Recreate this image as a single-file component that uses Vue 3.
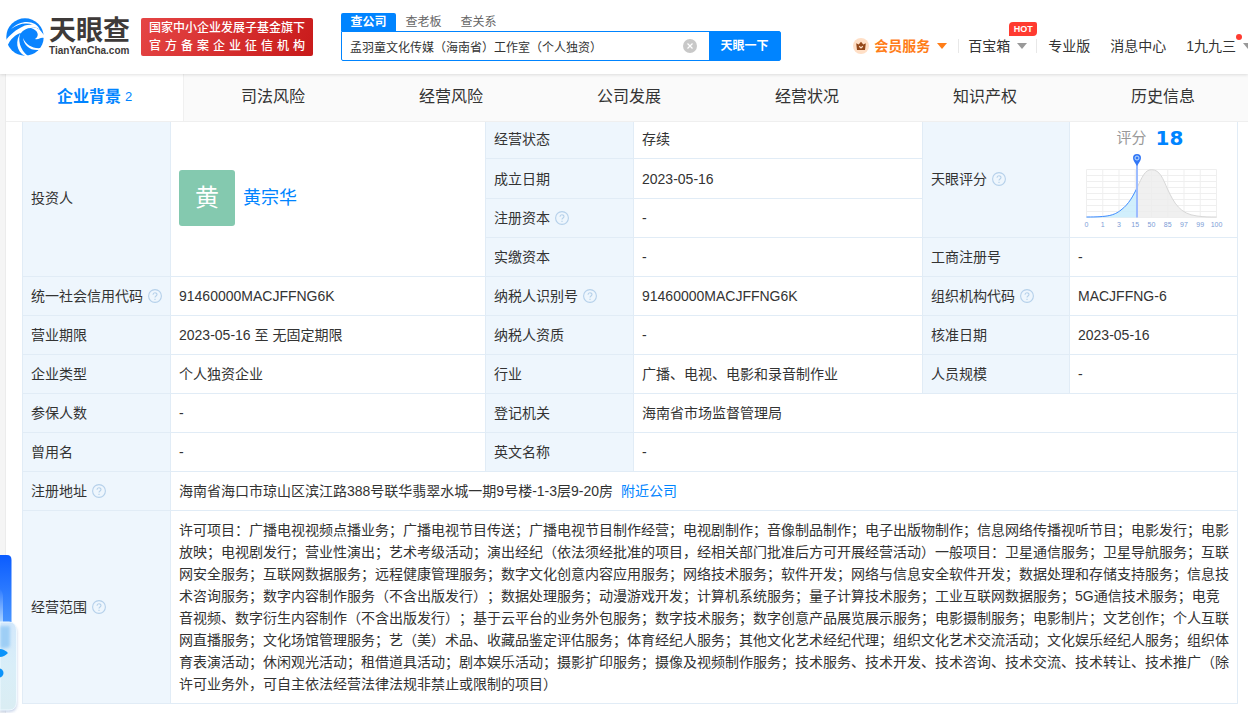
<script setup>
import { ref } from 'vue'

const keyword = ref('孟羽童文化传媒（海南省）工作室（个人独资）')
const searchTabs = ['查公司', '查老板', '查关系']
const sections = ['企业背景', '司法风险', '经营风险', '公司发展', '经营状况', '知识产权', '历史信息']

const scope =
  '许可项目：广播电视视频点播业务；广播电视节目传送；广播电视节目制作经营；电视剧制作；音像制品制作；电子出版物制作；信息网络传播视听节目；电影发行；电影放映；电视剧发行；营业性演出；艺术考级活动；演出经纪（依法须经批准的项目，经相关部门批准后方可开展经营活动）一般项目：卫星通信服务；卫星导航服务；互联网安全服务；互联网数据服务；远程健康管理服务；数字文化创意内容应用服务；网络技术服务；软件开发；网络与信息安全软件开发；数据处理和存储支持服务；信息技术咨询服务；数字内容制作服务（不含出版发行）；数据处理服务；动漫游戏开发；计算机系统服务；量子计算技术服务；工业互联网数据服务；5G通信技术服务；电竞音视频、数字衍生内容制作（不含出版发行）；基于云平台的业务外包服务；数字技术服务；数字创意产品展览展示服务；电影摄制服务；电影制片；文艺创作；个人互联网直播服务；文化场馆管理服务；艺（美）术品、收藏品鉴定评估服务；体育经纪人服务；其他文化艺术经纪代理；组织文化艺术交流活动；文化娱乐经纪人服务；组织体育表演活动；休闲观光活动；租借道具活动；剧本娱乐活动；摄影扩印服务；摄像及视频制作服务；技术服务、技术开发、技术咨询、技术交流、技术转让、技术推广（除许可业务外，可自主依法经营法律法规非禁止或限制的项目）'

const h = (text, extra = {}) => ({ tag: 'th', text, ...extra })
const d = (text, extra = {}) => ({ tag: 'td', text, ...extra })

const rows = [
  [
    h('投资人', { rows: 4 }),
    d('', { rows: 4, kind: 'investor' }),
    h('经营状态'),
    d('存续'),
    h('天眼评分', { rows: 3, help: true }),
    d('', { rows: 3, kind: 'score' }),
  ],
  [h('成立日期'), d('2023-05-16', { kind: 'tall' })],
  [h('注册资本', { help: true }), d('-')],
  [h('实缴资本'), d('-'), h('工商注册号'), d('-')],
  [
    h('统一社会信用代码', { help: true }),
    d('91460000MACJFFNG6K'),
    h('纳税人识别号', { help: true }),
    d('91460000MACJFFNG6K'),
    h('组织机构代码', { help: true }),
    d('MACJFFNG-6'),
  ],
  [h('营业期限'), d('2023-05-16 至 无固定期限'), h('纳税人资质'), d('-'), h('核准日期'), d('2023-05-16')],
  [h('企业类型'), d('个人独资企业'), h('行业'), d('广播、电视、电影和录音制作业'), h('人员规模'), d('-')],
  [h('参保人数'), d('-'), h('登记机关'), d('海南省市场监督管理局', { cols: 3 })],
  [h('曾用名'), d('-'), h('英文名称'), d('-', { cols: 3 })],
  [h('注册地址', { help: true }), d('海南省海口市琼山区滨江路388号联华翡翠水城一期9号楼-1-3层9-20房', { cols: 5, kind: 'address' })],
  [h('经营范围', { help: true }), d(scope, { cols: 5 })],
]

const ticks = ['0', '1', '3', '15', '50', '85', '97', '99', '100']
const tickX = (i) => 2.5 + i * 16.25
</script>

<template>
  <div class="page">
    <header class="header">
      <a class="logo" href="#" aria-label="天眼查">
        <svg class="mark" viewBox="0 0 38 38" aria-hidden="true">
          <circle cx="19" cy="19" r="18.7" fill="#0a84ff" />
          <path d="M5 11C12 4 22 2 29 6C32 8 33 10 34 12C31 9 28 9 25 10C21 10 17 12 15 15C10 16 4 21 1 29C0 27 0 24 0 22C3 18 8 13 14 10C18 7 23 6 27 7C20 4 12 6 5 11Z" fill="#fff" />
          <path d="M25 10C30 8 34 11 38 17V20C34 19 33 22 29 21C34 18 32 12 25 10Z" fill="#fff" />
          <path d="M15 14C11 21 14 32 22 38L19 38C10 33 9 23 15 14Z" fill="#fff" />
          <path d="M17 20C18 27 24 33 33 32L35 30C27 31 20 27 17 20Z" fill="#fff" />
        </svg>
        <span class="words">
          <span class="brand">天眼查</span>
          <span class="domain">TianYanCha.com</span>
        </span>
      </a>
      <div class="slogan">
        <span>国家中小企业发展子基金旗下</span>
        <span class="second">官方备案企业征信机构</span>
      </div>
      <form class="search" @submit.prevent>
        <div class="kinds">
          <button v-for="(t, i) in searchTabs" :key="t" type="button" :class="{ on: i === 0 }">{{ t }}</button>
        </div>
        <div class="box">
          <input v-model="keyword" type="text" aria-label="搜索公司" />
          <button class="clear" type="button" aria-label="清空" @click="keyword = ''">
            <svg viewBox="0 0 14 14"><circle cx="7" cy="7" r="7" fill="#c8c8c8" /><path d="M4.5 4.5l5 5M9.5 4.5l-5 5" stroke="#fff" stroke-width="1.2" /></svg>
          </button>
          <button class="go" type="submit">天眼一下</button>
        </div>
      </form>
      <nav class="nav">
        <a class="vip" href="#">
          <svg class="crown" viewBox="0 0 16 16" aria-hidden="true">
            <circle cx="8" cy="8" r="8" fill="#ffdfc6" />
            <path d="M3.2 5.2L5.7 6.4L8 3.7L10.3 6.4L12.8 5.2L12 12H4Z" fill="#94481a" />
            <path d="M6.2 8.3L8 10L9.8 8.3" fill="none" stroke="#ffdfc6" stroke-width="1.2" />
          </svg>
          会员服务<i class="caret"></i>
        </a>
        <a class="tools" href="#">百宝箱<i class="caret"></i><b class="hot">HOT</b></a>
        <a class="pro" href="#">专业版</a>
        <a class="msg" href="#">消息中心</a>
        <a class="user" href="#">1九九三<i class="caret"></i><i class="dot"></i></a>
      </nav>
    </header>

    <main class="main">
      <nav class="sections">
        <a v-for="(s, i) in sections" :key="s" href="#" :class="{ on: i === 0 }">{{ s }}<small v-if="i === 0">2</small></a>
      </nav>
      <div class="content">
        <table>
          <colgroup>
            <col class="label" /><col class="v1" /><col class="label" /><col class="v2" /><col class="label last" /><col class="v3" />
          </colgroup>
          <tbody>
            <tr v-for="(row, r) in rows" :key="r">
              <component
                :is="c.tag"
                v-for="(c, i) in row"
                :key="i"
                :rowspan="c.rows"
                :colspan="c.cols"
                :scope="c.tag === 'th' ? 'row' : null"
                :class="c.kind"
              >
                <div v-if="c.kind === 'investor'" class="person">
                  <span class="avatar">黄</span><a href="#">黄宗华</a>
                </div>
                <template v-else-if="c.kind === 'score'">
                  <div class="rate">评分<strong>18</strong></div>
                  <svg class="chart" viewBox="0 0 142 78" role="img" aria-label="评分分布">
                    <g stroke="#efefef" stroke-width="1">
                      <path v-for="n in 9" :key="'v' + n" :d="`M${tickX(n - 1)} 17.5V65.5`" />
                      <path v-for="n in 9" :key="'h' + n" :d="`M2.5 ${11.5 + n * 6}H132.5`" />
                    </g>
                    <path d="M53 36C58 25 61 17.7 67.5 17.7C76 17.7 79 27 83.5 37C90 51 96 62 113 64C120 65 126 65 132.5 65V65.5H53Z" fill="#ececec" fill-opacity=".8" />
                    <path d="M2.5 65C24 65 30 63.5 37 58C45 52 49 44 53 36V65.5H2.5Z" fill="#c9ecfb" fill-opacity=".85" />
                    <path d="M53 36C58 25 61 17.7 67.5 17.7C76 17.7 79 27 83.5 37C90 51 96 62 113 64C120 65 126 65 132.5 65" fill="none" stroke="#d8d8d8" />
                    <path d="M2.5 65C24 65 30 63.5 37 58C45 52 49 44 53 36" fill="none" stroke="#3d8bff" />
                    <path d="M53 12V65.5" stroke="#9dbcff" stroke-width="2" />
                    <path d="M53 14C51.5 11 49 9 49 6A4 4 0 0 1 57 6C57 9 54.5 11 53 14Z" fill="#3478f6" />
                    <circle cx="53" cy="6" r="2" fill="none" stroke="#bfe0ff" />
                    <text v-for="(t, i) in ticks" :key="t" :x="tickX(i)" y="75" text-anchor="middle">{{ t }}</text>
                  </svg>
                </template>
                <template v-else>
                  {{ c.text }}
                  <a v-if="c.kind === 'address'" class="near" href="#">附近公司</a>
                  <svg v-if="c.help" class="help" viewBox="0 0 14 14" aria-hidden="true">
                    <circle cx="7" cy="7" r="6.4" />
                    <path d="M5 5.7C5 3.2 9 3.2 9 5.6C9 7 7 7 7 8.5M7 9.7V10.9" />
                  </svg>
                </template>
              </component>
            </tr>
          </tbody>
        </table>
      </div>
    </main>

    <aside class="float" aria-hidden="true">
      <svg viewBox="0 0 24 160">
        <defs>
          <linearGradient id="blue" x1="0" y1="0" x2="0" y2="1">
            <stop offset="0" stop-color="#0b5cff" /><stop offset="1" stop-color="#4f9bff" />
          </linearGradient>
          <linearGradient id="glass" x1="0" y1="0" x2="0" y2="1">
            <stop offset="0" stop-color="#d3e8fb" /><stop offset=".5" stop-color="#d9eef8" /><stop offset="1" stop-color="#daedf3" />
          </linearGradient>
          <linearGradient id="pale" x1="0" y1="0" x2="0" y2="1">
            <stop offset="0" stop-color="#2f7cff" /><stop offset="1" stop-color="#b8dcff" />
          </linearGradient>
          <filter id="soft" x="-50%" y="-50%" width="200%" height="200%"><feGaussianBlur stdDeviation="1.5" /></filter>
        </defs>
        <path d="M0 0H7Q11.5 0 11.5 5V75H0Z" fill="url(#blue)" />
        <path d="M0 34Q3 37 3 42V70H0Z" fill="url(#pale)" />
        <path d="M0 70H9Q17 70 17 78V148Q17 157 9 157H0Z" fill="#9fb4d8" opacity=".6" filter="url(#soft)" />
        <path d="M0 67H9Q16.5 67 16.5 76V146Q16.5 155 9 155H0Z" fill="url(#glass)" stroke="#eff9ff" />
        <path d="M0 71H10V91Q8 94 0 93Z" fill="#91c8f5" opacity=".8" filter="url(#soft)" />
        <path d="M0 94Q4 94 8 98Q4 102 0 102Z" fill="#0b93fa" />
        <circle cx="-1" cy="118" r="4.5" fill="#0b93fa" />
      </svg>
    </aside>
  </div>
</template>

<style>
body {
  margin: 0;
  background: #f5f5f5;
}
</style>

<style scoped>
.page {
  position: relative;
  min-height: 100vh;
  overflow: hidden;
  display: flex;
  flex-direction: column;
  font-family: "Liberation Sans", "Noto Sans CJK SC", sans-serif;
  font-size: 14px;
  line-height: 22px;
  color: #333;
  text-spacing-trim: space-all;
}
a {
  color: inherit;
  text-decoration: none;
}
button {
  border: 0;
  padding: 0;
  margin: 0;
  font: inherit;
  color: inherit;
  background: none;
  cursor: pointer;
}
.header {
  position: relative;
  z-index: 3;
  height: 74px;
  display: flex;
  align-items: center;
  padding-left: 6px;
  background: #fff;
  box-shadow: 0 1px 3px rgba(0, 0, 0, 0.12);
  white-space: nowrap;
}
.logo {
  display: flex;
  gap: 5px;
  width: 135px;
  color: #3e3a39;
}
.mark {
  width: 38px;
  height: 38px;
}
.words {
  display: flex;
  flex-direction: column;
}
.brand {
  font-size: 27px;
  line-height: 27px;
  font-weight: 700;
}
.domain {
  font-size: 10px;
  line-height: 11px;
  font-weight: 700;
}
.slogan {
  box-sizing: border-box;
  width: 172px;
  height: 38px;
  padding: 1px 8px;
  border-radius: 2px;
  background: linear-gradient(120deg, #e54545, #c81a1a);
  color: #fff;
  font-size: 12px;
  line-height: 18px;
  font-weight: 500;
}
.slogan span {
  display: block;
}
.slogan .second {
  text-align-last: justify;
}
.search {
  width: 440px;
  margin-left: 28px;
}
.kinds {
  display: flex;
  height: 18px;
  font-size: 12px;
  line-height: 18px;
  color: #666;
}
.kinds button {
  width: 55px;
}
.kinds .on {
  background: #0084ff;
  color: #fff;
  font-weight: 700;
  border-radius: 2px 2px 0 0;
}
.box {
  box-sizing: border-box;
  height: 30px;
  display: flex;
  align-items: center;
  border: 1px solid #0084ff;
  border-radius: 0 2px 2px 2px;
}
.box input {
  flex: 1;
  min-width: 0;
  height: 26px;
  border: 0;
  outline: 0;
  padding: 0 8px;
  font: 12px "Liberation Sans", "Noto Sans CJK SC", sans-serif;
  color: #333;
  background: transparent;
}
.clear {
  width: 14px;
  height: 14px;
  margin-right: 12px;
}
.clear svg {
  display: block;
}
.go {
  width: 71px;
  height: 28px;
  background: #0084ff;
  color: #fff;
  font-size: 12px;
  font-weight: 700;
}
.nav {
  display: flex;
  align-items: center;
  margin-left: auto;
  margin-right: -5px;
  padding-top: 18px;
}
.nav a {
  position: relative;
  display: flex;
  align-items: center;
}
.caret {
  margin-left: 7px;
  border: 5px solid transparent;
  border-top: 6px solid #999;
  border-bottom: 0;
}
.vip {
  color: #ff7d18;
  font-weight: 700;
}
.vip .caret {
  border-top-color: #ff7d18;
}
.crown {
  width: 16px;
  height: 16px;
  margin-right: 5px;
}
.tools {
  margin-left: 11px;
  padding: 0 10px;
}
.tools::before,
.tools::after {
  content: "";
  position: absolute;
  top: 4px;
  width: 1px;
  height: 14px;
  background: #e8e8e8;
}
.tools::before {
  left: 0;
}
.tools::after {
  right: 0;
}
.hot {
  position: absolute;
  top: -13px;
  right: 0;
  width: 28px;
  height: 14px;
  border-radius: 4px 2px 4px 0;
  background: #ff3b30;
  color: #fff;
  font-size: 9px;
  line-height: 14px;
  text-align: center;
}
.pro {
  margin-left: 11px;
}
.msg {
  margin-left: 20px;
}
.user {
  margin-left: 20px;
}
.dot {
  position: absolute;
  top: -1px;
  right: 11px;
  width: 6px;
  height: 6px;
  border-radius: 50%;
  background: #ff3b30;
}
.main {
  flex: 1;
  margin-left: 5px;
  margin-right: -4px;
  border-left: 1px solid #ececec;
  background: #fff;
}
.sections {
  position: relative;
  z-index: 2;
  box-sizing: border-box;
  height: 48px;
  display: flex;
  background: #fafafa;
  border-bottom: 1px solid #efefef;
}
.sections a {
  box-sizing: border-box;
  width: calc(100% / 7);
  display: flex;
  align-items: center;
  justify-content: center;
  font-size: 16px;
  padding-bottom: 1px;
}
.sections .on {
  background: #fff;
  color: #0084ff;
  font-weight: 700;
  border-right: 1px solid #f0f0f0;
}
.sections small {
  margin-left: 4px;
  font-size: 13px;
  font-weight: 400;
}
.content {
  margin-top: -3px;
  padding: 0 15px 9px 16px;
}
table {
  width: 100%;
  table-layout: fixed;
  border-collapse: collapse;
}
.label {
  width: 148px;
}
.label.last {
  width: 147px;
}
.v1 {
  width: 315px;
}
.v2 {
  width: 289px;
}
.v3 {
  width: 168px;
}
th,
td {
  height: 22px;
  padding: 8px 7px 8px 8px;
  border: 1px solid #e1ecf6;
  text-align: left;
  vertical-align: middle;
  font-weight: 400;
}
td.tall {
  height: 23px;
}
th {
  background: #eef6fd;
  white-space: nowrap;
}
.help {
  width: 14px;
  height: 14px;
  margin-left: 1px;
  vertical-align: -2px;
  fill: none;
  stroke: #b5d0ea;
  stroke-width: 1.1;
}
.person {
  display: flex;
  align-items: center;
  gap: 8px;
}
.person a {
  color: #0084ff;
  font-size: 18px;
}
.avatar {
  width: 56px;
  height: 56px;
  border-radius: 3px;
  background: #84c9af;
  color: #fff;
  font-size: 24px;
  line-height: 56px;
  text-align: center;
}
td.score {
  padding: 2px 7px 7px;
}
.rate {
  box-sizing: border-box;
  display: flex;
  justify-content: center;
  align-items: center;
  gap: 9px;
  padding: 2px 7px 0 0;
  height: 30px;
  font-size: 15px;
  color: #999;
}
.rate strong {
  font-family: "DejaVu Sans", sans-serif;
  font-size: 20px;
  color: #0084ff;
}
.chart {
  display: block;
  width: 142px;
  height: 78px;
  margin-left: 7px;
}
.chart text {
  font-family: "Liberation Sans", sans-serif;
  font-size: 7px;
  fill: #7c9cd6;
}
.near {
  margin-left: 4px;
  color: #0084ff;
}
.float {
  position: absolute;
  left: 0;
  bottom: -2px;
  z-index: 4;
  width: 24px;
  height: 160px;
}
.float svg {
  display: block;
  width: 24px;
  height: 160px;
}
</style>
